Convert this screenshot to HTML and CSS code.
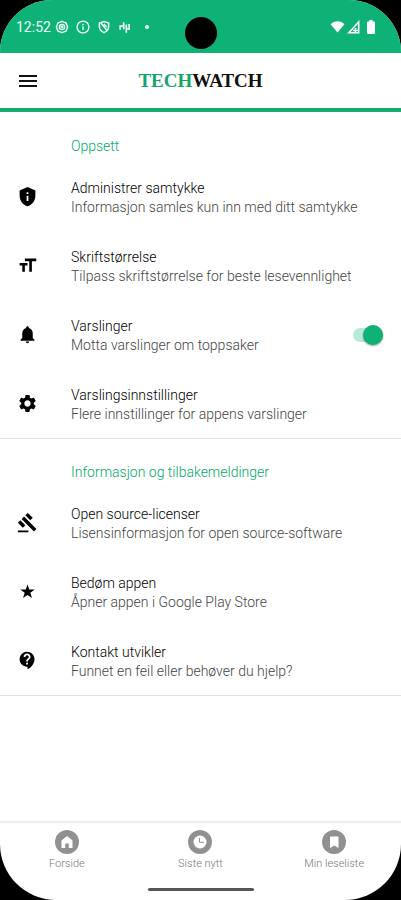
FILE: index.html
```html
<!DOCTYPE html>
<html lang="no">
<head>
<meta charset="utf-8">
<meta name="viewport" content="width=device-width, initial-scale=1">
<title>Techwatch</title>
<link rel="stylesheet" href="styles.css">
</head>
<body>
<div class="screen">
  <div class="status">
    <div class="status-left">
      <span class="time">12:52</span>
      <svg viewBox="0 0 16 16" fill="none" stroke="currentColor"><path stroke-width="1.600" d="M8 1.500l2.200.9 2.400.9.900 2.400.9 2.300-.9 2.300-.9 2.400-2.400.9L8 14.500l-2.200-.9-2.400-.9-.9-2.400L1.600 8l.9-2.300.9-2.400 2.400-.9z"/><circle cx="8" cy="8" r="3" stroke-width="1.500"/><circle cx="8" cy="8" r="1.600" fill="currentColor" stroke="none"/></svg>
      <svg viewBox="0 0 16 16" fill="none" stroke="currentColor" stroke-width="1.500"><circle cx="8" cy="8" r="6.800"/><path d="M8 7v4.500M8 4.300v1.600"/></svg>
      <svg viewBox="0 0 16 16" fill="none" stroke="currentColor" stroke-width="1.700"><path d="M8 1.700l5.300 1.800v4c0 3.300-2.200 5.600-5.300 7-3.100-1.400-5.300-3.700-5.300-7v-4z"/><path d="M4.500 3.500l7 8.500M8 4.500l3 3.500"/></svg>
      <svg viewBox="0 0 16 16" fill="none" stroke="currentColor" stroke-width="1.900"><path d="M2.500 6v5M2.500 7.500l3-1M6.500 2.500v8M9.500 5v9.500M9.500 10.300h3.500M12.700 4.500v7"/></svg>
      <span class="dot"></span>
    </div>
    <span class="camera"></span>
    <div class="status-right">
      <svg class="wifi" viewBox="0 0 16 14" fill="currentColor"><path d="M.5 4.500C4.500.300 11.500.300 15.500 4.500L8 13.500z"/></svg>
      <svg class="signal" viewBox="0 0 13 14" fill="none" stroke="currentColor" stroke-width="1.500"><path d="M1.800 12.700L11.700 2v10.700zM8.500 8v4.500M6 10.500h5"/></svg>
      <svg class="battery" viewBox="0 0 8 14" fill="currentColor"><path d="M2.500 0h3v1.500H7a1 1 0 0 1 1 1V13a1 1 0 0 1-1 1H1a1 1 0 0 1-1-1V2.500a1 1 0 0 1 1-1h1.500z"/></svg>
    </div>
  </div>

  <header class="bar">
    <button class="menu" type="button" aria-label="Meny"><svg viewBox="0 0 18 12" fill="currentColor"><path d="M0 0h18v2H0zM0 5h18v2H0zM0 10h18v2H0z"/></svg></button>
    <h1 class="brand"><span>TECH</span>WATCH</h1>
  </header>

  <main>
    <section>
      <h2>Oppsett</h2>
      <a class="row" href="#samtykke">
        <svg class="icon" viewBox="0 0 24 24"><path d="M12 1L3 5v6c0 5.550 3.840 10.740 9 12 5.160-1.260 9-6.450 9-12V5zm1 16h-2v-6h2zm0-8h-2V7h2z"/></svg>
        <span class="text"><span class="title">Administrer samtykke</span><span class="sub">Informasjon samles kun inn med ditt samtykke</span></span>
      </a>
      <a class="row" href="#skrift">
        <svg class="icon" viewBox="0 0 24 24"><path d="M9 4v3h5v12h3V7h5V4zm-6 8h3v7h3v-7h3V9H3z"/></svg>
        <span class="text"><span class="title">Skriftstørrelse</span><span class="sub">Tilpass skriftstørrelse for beste lesevennlighet</span></span>
      </a>
      <label class="row">
        <svg class="icon" viewBox="0 0 24 24"><path d="M12 22c1.100 0 2-.9 2-2h-4c0 1.100.9 2 2 2zm6-6v-5c0-3.070-1.630-5.640-4.500-6.320V4c0-.83-.67-1.500-1.500-1.500s-1.500.67-1.500 1.500v.68C7.640 5.360 6 7.920 6 11v5l-2 2v1h16v-1z"/></svg>
        <span class="text"><span class="title">Varslinger</span><span class="sub">Motta varslinger om toppsaker</span></span>
        <input class="switch" type="checkbox" role="switch" checked>
      </label>
      <a class="row" href="#innstillinger">
        <svg class="icon" viewBox="0 0 24 24"><path d="M19.140 12.940c.04-.3.060-.61.060-.94 0-.32-.02-.64-.07-.94l2.030-1.580c.18-.14.230-.41.120-.61l-1.920-3.320c-.12-.22-.37-.29-.59-.22l-2.390.96c-.5-.38-1.030-.7-1.620-.94l-.36-2.540c-.04-.24-.24-.41-.48-.41h-3.840c-.24 0-.43.170-.47.410l-.36 2.540c-.59.240-1.130.570-1.620.940l-2.390-.96c-.22-.08-.47 0-.59.220L2.740 8.870c-.12.210-.08.470.120.610l2.030 1.580c-.05.300-.09.630-.09.940s.02.640.070.940l-2.030 1.580c-.18.140-.23.410-.12.610l1.920 3.320c.12.220.37.290.59.220l2.390-.96c.5.380 1.030.7 1.620.940l.36 2.540c.05.240.24.410.48.410h3.840c.24 0 .44-.17.470-.41l.36-2.540c.59-.24 1.130-.56 1.620-.94l2.390.96c.22.080.47 0 .59-.22l1.920-3.320c.12-.22.070-.47-.12-.61zM12 15.600c-1.980 0-3.600-1.620-3.600-3.600s1.620-3.600 3.600-3.600 3.600 1.620 3.600 3.600-1.620 3.600-3.600 3.600z"/></svg>
        <span class="text"><span class="title">Varslingsinnstillinger</span><span class="sub">Flere innstillinger for appens varslinger</span></span>
      </a>
    </section>
    <section>
      <h2>Informasjon og tilbakemeldinger</h2>
      <a class="row" href="#lisenser">
        <svg class="icon" viewBox="0 0 24 24"><path d="M1 21h12v2H1zM5.240 8.070l2.830-2.830 14.140 14.140-2.830 2.830zM12.320 1l5.660 5.660-2.830 2.830-5.660-5.660zM3.830 9.480l5.660 5.660-2.830 2.830L1 12.310z"/></svg>
        <span class="text"><span class="title">Open source-licenser</span><span class="sub">Lisensinformasjon for open source-software</span></span>
      </a>
      <a class="row" href="#bedom">
        <svg class="icon" viewBox="0 0 24 24"><path d="M12 4l2 5.800h6.300l-5.100 3.700 1.900 6L12 15.900l-5.100 3.600 1.900-6-5.100-3.700H10z"/></svg>
        <span class="text"><span class="title">Bedøm appen</span><span class="sub">Åpner appen i Google Play Store</span></span>
      </a>
      <a class="row" href="#kontakt">
        <svg class="icon" viewBox="0 0 24 24"><path d="M11.500 2C6.810 2 3 5.810 3 10.500S6.810 19 11.500 19h.5v3c4.860-2.340 8-7 8-11.500C20 5.810 16.190 2 11.500 2zm1 14.500h-2v-2h2zm0-3.500h-2c0-3.250 3-3 3-5 0-1.100-.9-2-2-2s-2 .9-2 2h-2c0-2.210 1.790-4 4-4s4 1.790 4 4c0 2.500-3 2.750-3 5z"/></svg>
        <span class="text"><span class="title">Kontakt utvikler</span><span class="sub">Funnet en feil eller behøver du hjelp?</span></span>
      </a>
    </section>
  </main>

  <nav class="tabs">
    <a href="#forside"><svg viewBox="0 0 24 24"><circle cx="12" cy="12" r="12"/><path class="cut" d="M12 6L6.500 10.500V18h3.800v-4.500h3.400V18h3.800v-7.500z"/></svg>Forside</a>
    <a href="#siste"><svg viewBox="0 0 24 24"><circle cx="12" cy="12" r="12"/><circle class="cut" cx="12" cy="12" r="6.500"/><path class="hand" d="M11.500 8v4.300H16"/></svg>Siste nytt</a>
    <a href="#leseliste"><svg viewBox="0 0 24 24"><circle cx="12" cy="12" r="12"/><path class="cut" d="M8 6.500h8.500V18l-4.200-2.500L8 18z"/></svg>Min leseliste</a>
  </nav>
  <div class="gesture"></div>
</div>
</body>
</html>
```

FILE: styles.css
```css
* { box-sizing: border-box; }
body {
  margin: 0;
  background: #000;
  font-family: Roboto, "Liberation Sans", sans-serif;
  color: #222;
}
.screen {
  display: flex;
  flex-direction: column;
  min-height: 100vh;
  background: #fff;
  border-radius: 52px 52px 56px 56px;
  overflow: hidden;
}
a { color: inherit; text-decoration: none; }

.status {
  display: grid;
  grid-template-columns: 1fr 32px 1fr;
  align-items: center;
  height: 53px;
  padding: 0 16px;
  background: #0eb277;
  color: #e9fff6;
}
.status-left, .status-right { display: flex; align-items: center; }
.status-left { gap: 7px; }
.status-left svg { width: 14px; height: 14px; flex: none; }
.time { font-size: 14px; margin-right: -3px; }
.dot { width: 4px; height: 4px; margin-left: 6px; border-radius: 50%; background: currentColor; }
.camera { width: 32px; height: 32px; margin-top: 12px; border-radius: 50%; background: #000; }
.status-right { justify-content: flex-end; gap: 2px; padding-right: 10px; color: #fff; }
.wifi { width: 15px; height: 13px; }
.signal { width: 13px; height: 14px; }
.battery { width: 8px; height: 14px; margin-left: 5px; }

.bar {
  display: grid;
  grid-template-columns: 36px 1fr 36px;
  align-items: center;
  height: 59px;
  padding: 0 10px;
  border-bottom: 4px solid #14ab70;
}
.menu {
  display: grid;
  place-items: center;
  width: 36px;
  height: 36px;
  padding: 0;
  border: 0;
  background: none;
  color: #111;
}
.menu svg { width: 18px; height: 12px; }
.brand {
  margin: 0;
  text-align: center;
  font: bold 19px "Liberation Serif", serif;
  color: #111;
}
.brand span { color: #14a56e; }

main { flex: 1; padding-top: 1px; }
section { border-bottom: 1px solid #e2e2e2; }
h2 {
  margin: 0;
  padding: 24px 16px 7px 71px;
  font-size: 14px;
  line-height: 18px;
  font-weight: 300;
  color: #00a868;
}
.row {
  display: flex;
  align-items: center;
  min-height: 69px;
  padding: 0 18px 0 17px;
}
.icon { width: 21px; height: 21px; margin-right: 33px; flex: none; fill: #000; }
.text { flex: 1; padding-top: 2px; font-size: 14px; line-height: 19px; font-weight: 300; }
.title, .sub { display: block; }
.title { color: #000; }
.sub { color: #444; }

.switch {
  appearance: none;
  display: flex;
  align-items: center;
  width: 30px;
  height: 14px;
  margin: 0;
  border-radius: 7px;
  background: #b9ead7;
}
.switch::before {
  content: "";
  width: 20px;
  height: 20px;
  flex: none;
  border-radius: 50%;
  background: #999;
  box-shadow: 0 1px 2px #0006;
}
.switch:checked { justify-content: flex-end; }
.switch:checked::before { background: #0eb277; }

.tabs {
  display: grid;
  grid-template-columns: repeat(3, 1fr);
  padding-top: 7px;
  border-top: 2px solid #eee;
  color: #777;
  font-size: 11px;
  font-weight: 300;
  line-height: 14px;
}
.tabs a { display: flex; flex-direction: column; align-items: center; gap: 3px; }
.tabs svg { width: 24px; height: 24px; fill: #919191; }
.tabs .cut { fill: #fff; }
.tabs .hand { fill: none; stroke: #919191; stroke-width: 1; }
.gesture {
  width: 106px;
  height: 3px;
  margin: 17px auto 9px;
  border-radius: 2px;
  background: #555;
}
```
